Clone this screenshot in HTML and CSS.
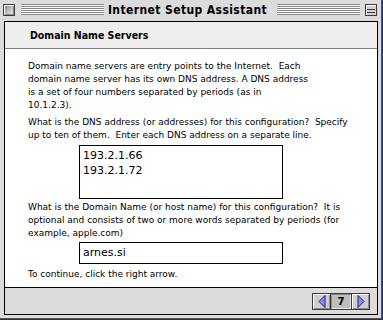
FILE: index.html
```html
<!DOCTYPE html>
<html lang="en">
  <head>
    <meta charset="UTF-8" />
    <title>Internet Setup Assistant</title>
    <link rel="stylesheet" href="styles.css">
  </head>
  <body>
    <div class="window">
      <div class="titlebar">
        <span class="close-box"></span>
        <span class="stripes"></span>
        <span class="title">Internet Setup Assistant</span>
        <span class="stripes"></span>
        <span class="shade-box"></span>
      </div>

      <div class="panel">
        <div class="panel-head">Domain Name Servers</div>

        <div class="panel-body">
          <p>
            Domain name servers are entry points to the Internet.&nbsp; Each<br>
            domain name server has its own DNS address. A DNS address<br>
            is a set of four numbers separated by periods (as in<br>
            10.1.2.3).
          </p>
          <p>
            What is the DNS address (or addresses) for this configuration?&nbsp; Specify<br>
            up to ten of them.&nbsp; Enter each DNS address on a separate line.
          </p>
          <div class="textbox multi">193.2.1.66<br>193.2.1.72</div>
          <p>
            What is the Domain Name (or host name) for this configuration?&nbsp; It is<br>
            optional and consists of two or more words separated by periods (for<br>
            example, apple.com)
          </p>
          <div class="textbox single">arnes.si</div>
          <p>To continue, click the right arrow.</p>
        </div>

        <div class="panel-foot">
          <div class="pager">
            <span class="page-btn">
              <svg width="8" height="13" viewBox="0 0 8 13">
                <polygon points="1,6.5 7,0.5 7,12.5" fill="#8c8cf0" stroke="#1a1a80" stroke-width="1" />
              </svg>
            </span>
            <span class="page-btn page-num">7</span>
            <span class="page-btn">
              <svg width="8" height="13" viewBox="0 0 8 13">
                <polygon points="7,6.5 1,0.5 1,12.5" fill="#8c8cf0" stroke="#1a1a80" stroke-width="1" />
              </svg>
            </span>
          </div>
        </div>
      </div>
    </div>
  </body>
</html>
```

FILE: styles.css
```css
* {
  margin: 0;
  padding: 0;
  box-sizing: border-box;
}

body {
  background-color: #1d3160;
  width: 383px;
  height: 320px;
  overflow: hidden;
}

.window {
  width: 382px;
  height: 319px;
  background-color: #dcdcdc;
  border-right: 1px solid #555;
  border-bottom: 1px solid #555;
}

.titlebar {
  display: flex;
  align-items: center;
  height: 19px;
  padding: 0 4px 0 3px;
}

.close-box,
.shade-box {
  width: 12px;
  height: 12px;
  border: 1px solid #3c3c3c;
  flex: none;
}

.close-box {
  background: linear-gradient(135deg, #777 0%, #bbb 45%, #f2f2f2 100%);
  box-shadow: inset 1px 1px #fff, inset -1px -1px #888;
}

.shade-box {
  margin-left: 5px;
  background:
    linear-gradient(#3c3c3c, #3c3c3c) 1px 4px / 8px 1px no-repeat,
    linear-gradient(#3c3c3c, #3c3c3c) 1px 7px / 8px 1px no-repeat,
    #d0d0d0;
  box-shadow: inset 1px 1px #fff;
}

.stripes {
  flex: 1;
  height: 11px;
  margin-left: 6px;
  background: repeating-linear-gradient(
    #8a8a8a 0,
    #8a8a8a 1px,
    #fafafa 1px,
    #fafafa 2px
  );
}

.titlebar .stripes + .shade-box {
  margin-left: 5px;
}

.title {
  padding: 0 4px;
  font-family: 'DejaVu Sans Condensed', 'DejaVu Sans', sans-serif;
  font-weight: bold;
  font-size: 12px;
  letter-spacing: 0.4px;
  color: #000;
  white-space: nowrap;
}

.panel {
  width: 374px;
  height: 294px;
  margin: 2px 0 0 4px;
  border: 1px solid #000;
  display: flex;
  flex-direction: column;
  background-color: #fff;
}

.panel-head {
  height: 27px;
  padding-left: 25px;
  line-height: 26px;
  background-color: #eeeeee;
  border-bottom: 1px solid #808080;
  font-family: 'DejaVu Sans Condensed', 'DejaVu Sans', sans-serif;
  font-weight: bold;
  font-size: 10.5px;
}

.panel-body {
  flex: 1;
  padding: 11px 0 0 23px;
  font-family: 'DejaVu Sans', sans-serif;
  font-size: 9px;
  line-height: 13px;
  color: #000;
  white-space: nowrap;
}

.panel-body p + p {
  margin-top: 4px;
}

.textbox {
  width: 204px;
  margin-left: 51px;
  border: 1px solid #000;
  font-family: 'DejaVu Sans', sans-serif;
  font-size: 11px;
  padding-left: 3px;
}

.multi {
  height: 54px;
  margin-top: 3px;
  margin-bottom: 2px;
  padding-top: 2px;
  line-height: 15px;
}

.single {
  height: 22px;
  margin-top: 2px;
  margin-bottom: 4px;
  line-height: 20px;
}

.panel-foot {
  height: 27px;
  border-top: 1px solid #000;
  background-color: #dcdcdc;
  display: flex;
  justify-content: flex-end;
  padding: 5px 7px 0 0;
}

.pager {
  display: flex;
  height: 17px;
}

.page-btn {
  width: 19px;
  height: 17px;
  border: 1px solid #3a3a3a;
  margin-left: -1px;
  display: flex;
  align-items: center;
  justify-content: center;
  background-color: #cfcfcf;
  box-shadow: inset 1px 1px #fff, inset -1px -1px #8c8c8c;
}

.page-num {
  width: 22px;
  background-color: #bdbdbd;
  box-shadow: inset 1px 1px #8c8c8c, inset -1px -1px #e6e6e6;
  font-family: 'DejaVu Sans', sans-serif;
  font-weight: bold;
  font-size: 10px;
}
```
